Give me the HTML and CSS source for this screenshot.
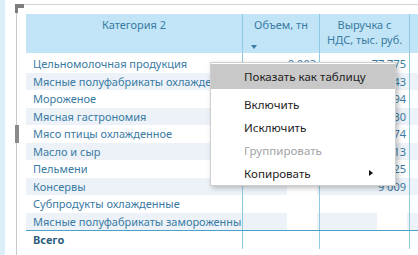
FILE: index.html
```html
<!DOCTYPE html>
<html lang="ru">
<head>
  <meta charset="UTF-8">
  <title>Матрица</title>
  <link rel="stylesheet" href="styles.css">
</head>
<body>
  <div class="page">
    <div class="strip"></div>
    <div class="visual">
      <span class="corner"></span>
      <span class="grip"></span>
      <div class="matrix">
        <div class="row head">
          <div class="cell">Категория 2</div>
          <div class="cell">Объем, тн<span class="sort"></span></div>
          <div class="cell">Выручка с<br>НДС, тыс. руб.</div>
          <div class="cell"></div>
        </div>
        <div class="row"><div class="cell">Цельномолочная продукция</div><div class="cell num">9 003</div><div class="cell num">77 775</div><div class="cell"></div></div>
        <div class="row alt"><div class="cell">Мясные полуфабрикаты охлажденные</div><div class="cell num"></div><div class="cell num">62 843</div><div class="cell"></div></div>
        <div class="row"><div class="cell">Мороженое</div><div class="cell num"></div><div class="cell num">41 094</div><div class="cell"></div></div>
        <div class="row alt"><div class="cell">Мясная гастрономия</div><div class="cell num"></div><div class="cell num">36 330</div><div class="cell"></div></div>
        <div class="row"><div class="cell">Мясо птицы охлажденное</div><div class="cell num"></div><div class="cell num">28 174</div><div class="cell"></div></div>
        <div class="row alt"><div class="cell">Масло и сыр</div><div class="cell num"></div><div class="cell num">21 613</div><div class="cell"></div></div>
        <div class="row"><div class="cell">Пельмени</div><div class="cell num"></div><div class="cell num">14 325</div><div class="cell"></div></div>
        <div class="row alt"><div class="cell">Консервы</div><div class="cell num"><span class="blank"></span></div><div class="cell num">9 009</div><div class="cell"></div></div>
        <div class="row"><div class="cell">Субпродукты охлажденные</div><div class="cell num"></div><div class="cell num"><span class="blank"></span></div><div class="cell"></div></div>
        <div class="row alt last"><div class="cell">Мясные полуфабрикаты замороженные</div><div class="cell num"><span class="blank"></span></div><div class="cell num"><span class="blank"></span></div><div class="cell"></div></div>
        <div class="row total"><div class="cell">Всего</div><div class="cell num"></div><div class="cell num"></div><div class="cell"></div></div>
      </div>
    </div>

    <div class="menu">
      <div class="item active">Показать как таблицу</div>
      <div class="item">Включить</div>
      <div class="item">Исключить</div>
      <div class="item disabled">Группировать</div>
      <div class="item sub">Копировать<span class="arrow"></span></div>
    </div>
  </div>
</body>
</html>
```

FILE: styles.css
```css
body {
  margin: 0;
  font-family: 'Noto Sans', 'Open Sans', sans-serif;
  background: #fff;
}

.page {
  position: relative;
  display: flex;
  width: 418px;
  height: 255px;
  overflow: hidden;
}

.strip {
  width: 5px;
  background: #dceff8;
  flex: none;
}

.visual {
  position: relative;
  margin: 4px 0 0 11px;
  padding: 9px 0 0 9px;
  border-left: 1px solid #c9c9c9;
  border-top: 1px solid #d4d4d4;
  flex: 1;
}

.corner {
  position: absolute;
  left: -2px;
  top: -1px;
  width: 9px;
  height: 4px;
  background: #7d7d7d;
}

.corner::after {
  content: '';
  position: absolute;
  left: 0;
  top: 4px;
  width: 3px;
  height: 5px;
  background: #7d7d7d;
}

.grip {
  position: absolute;
  left: -2px;
  top: 120px;
  width: 4px;
  height: 18px;
  background: #8a8a8a;
}

.matrix {
  font-size: 11px;
  color: #3a7aa3;
}

.row {
  display: grid;
  grid-template-columns: 217px 77px 90px 30px;
  height: 17.5px;
  line-height: 17.5px;
}

.row .cell {
  padding: 0 7px;
  white-space: nowrap;
  overflow: hidden;
  border-right: 1px solid #8fcae2;
  position: relative;
}

.row .cell:last-child {
  border-right: none;
}

.row.alt {
  background: #ecf2f8;
}

.cell.num {
  text-align: right;
  padding-right: 3px;
}

.head {
  height: 41px;
  line-height: 15px;
}

.head .cell {
  padding-top: 3px;
  text-align: center;
  background: linear-gradient(#c1e5f6, #c1e5f6) top / 100% 39px no-repeat;
}

.sort {
  position: absolute;
  left: 8px;
  top: 31px;
  border-left: 3px solid transparent;
  border-right: 3px solid transparent;
  border-top: 4px solid #3a7aa3;
}

.row.last {
  border-bottom: 1px solid #4ea1c6;
}

.total {
  height: 18px;
  line-height: 18px;
  font-weight: bold;
  color: #2f5f80;
}

.blank {
  position: absolute;
  right: 2px;
  top: 0;
  width: 30px;
  height: 100%;
  background: #fff;
}

.menu {
  position: absolute;
  left: 210px;
  top: 62px;
  width: 184px;
  height: 121px;
  padding: 1px 0 0;
  background: #fff;
  border: 1px solid #cfcfcf;
  box-shadow: 2px 2px 5px rgba(0, 0, 0, 0.25);
  font-size: 11.6px;
  color: #1e1e1e;
}

.item {
  position: relative;
  height: 23px;
  line-height: 23px;
  padding-left: 33px;
}

.item.active {
  height: 25px;
  line-height: 25px;
  margin-bottom: 4px;
  background: #c8c8c8;
}

.item.disabled {
  color: #a3a3a3;
}

.arrow {
  position: absolute;
  left: 158px;
  top: 8px;
  border-top: 3.5px solid transparent;
  border-bottom: 3.5px solid transparent;
  border-left: 4px solid #111;
}
```
